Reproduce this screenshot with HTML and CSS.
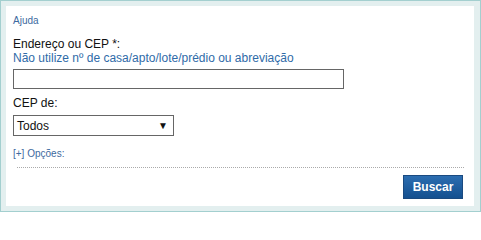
FILE: index.html
```html
<!DOCTYPE html>
<html lang="pt">
<head>
<meta charset="utf-8">
<link rel="stylesheet" href="styles.css">
</head>
<body>
<div class="frame">
  <div class="panel">
    <a class="help" href="#">Ajuda</a>
    <div class="field">
      <label class="label">Endereço ou CEP *:</label>
      <div class="hint">Não utilize nº de casa/apto/lote/prédio ou abreviação</div>
      <div class="input"></div>
    </div>
    <div class="field field-cep">
      <label class="label">CEP de:</label>
      <div class="select"><span>Todos</span><span class="arrow">▼</span></div>
    </div>
    <a class="options" href="#">[+] Opções:</a>
    <div class="actions">
      <button class="btn">Buscar</button>
    </div>
  </div>
</div>
</body>
</html>
```
FILE: styles.css
```css
html, body { margin: 0; padding: 0; background: #fff; }
body { font-family: "Liberation Sans", Arial, sans-serif; color: #111; }
.frame {
  width: 481px; height: 212px; box-sizing: border-box;
  border: 1px solid #a3cfcf;
  background: #e3efef;
  padding: 5px 6px 5px 5px;
}
.panel {
  height: 100%; box-sizing: border-box;
  background: #fff;
  padding: 9px 7px 0 7px;
  display: flex; flex-direction: column;
}
.help {
  font-size: 10px; color: #3d6aa0; text-decoration: none;
  line-height: 12px; height: 12px;
}
.field { margin-top: 10px; display: flex; flex-direction: column; }
.label { font-size: 12px; line-height: 14px; color: #111; }
.hint { font-size: 12px; line-height: 14px; color: #2f6ba8; }
.input {
  margin-top: 4px; width: 331px; height: 20px; box-sizing: border-box;
  border: 1px solid #666; background: #fff;
}
.field-cep { margin-top: 7px; }
.select {
  margin-top: 5px; width: 161px; height: 21px; box-sizing: border-box;
  border: 1px solid #666; background: #fff;
  display: flex; align-items: center; justify-content: space-between;
  padding: 0 5px 0 3px; font-size: 12px; color: #111;
}
.arrow { font-size: 10px; }
.options {
  margin-top: 12px; font-size: 10px; line-height: 12px; color: #3d6aa0;
  text-decoration: none; align-self: flex-start;
}
.actions {
  margin: 7px 3px 0 4px; padding-top: 7px;
  border-top: 1px dotted #aaa;
  display: flex; justify-content: flex-end;
}
.btn {
  width: 60px; height: 24px;
  border: 1px solid #1a4a80;
  background: linear-gradient(#2c6db0, #14508f);
  color: #fff; font-family: "Liberation Sans", Arial, sans-serif;
  font-weight: bold; font-size: 12px; padding: 0; margin-right: 1px;
}
```
